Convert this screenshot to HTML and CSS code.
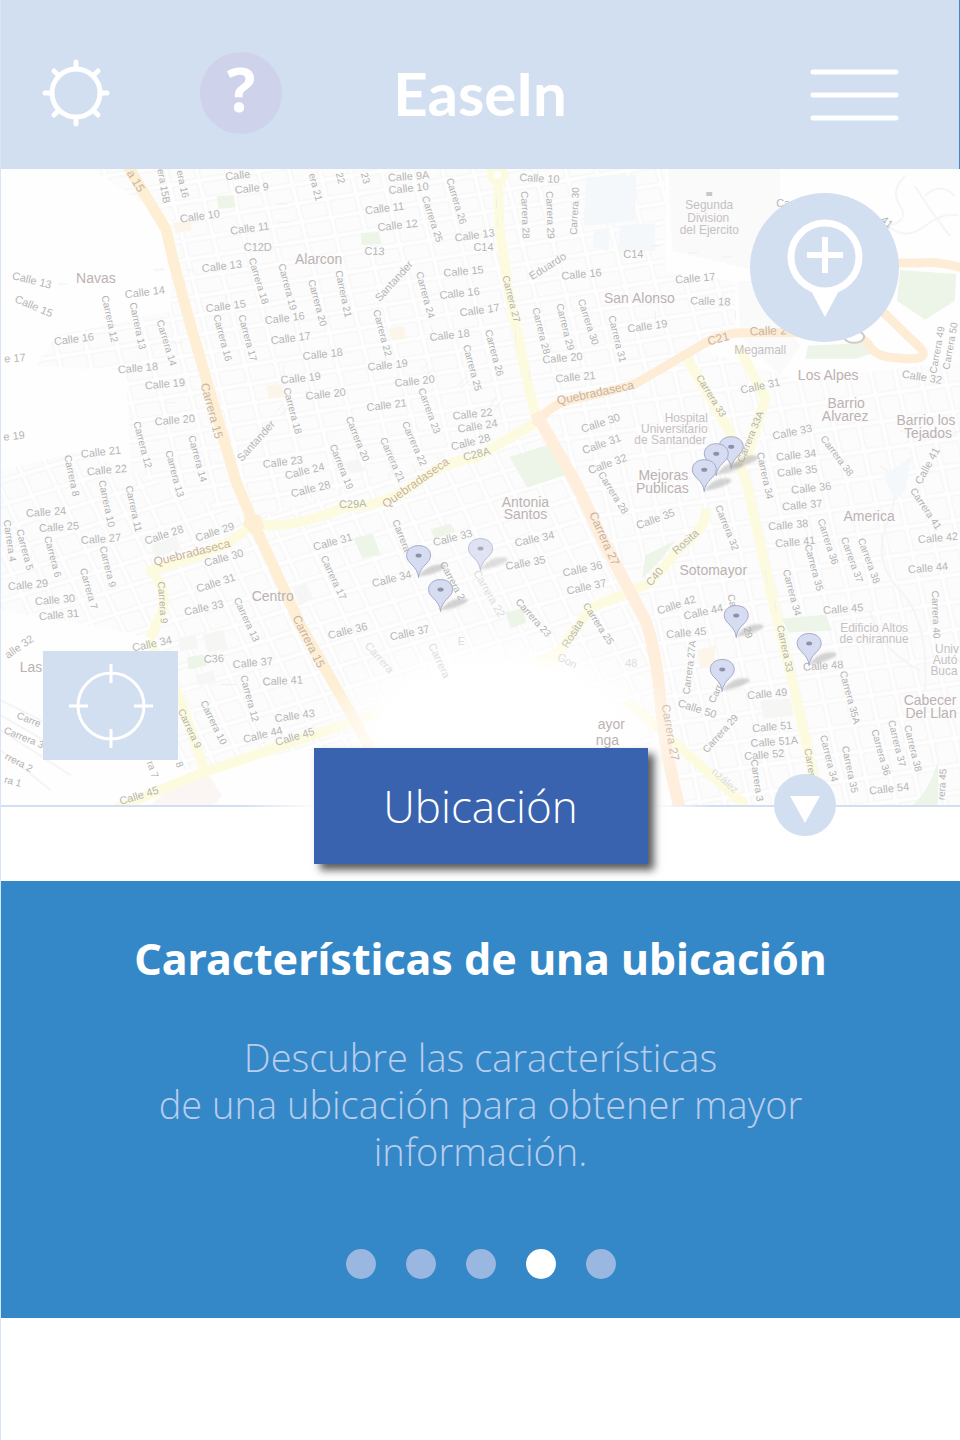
FILE: index.html
```html
<!DOCTYPE html>
<html lang="es">
<head>
<meta charset="utf-8">
<meta name="viewport" content="width=device-width, initial-scale=1">
<title>EaseIn</title>
<link rel="stylesheet" href="styles.css">
</head>
<body>
<div class="app">
  <header class="topbar">
    <div class="topbar-tools">
      <button class="icon-button" type="button" aria-label="Ajustes">
        <svg width="68" height="68" viewBox="-34 -34 68 68" fill="none" stroke="#fff" stroke-width="5" stroke-linecap="round">
          <circle r="24"/>
          <path d="M0-26V-31M0 26V31M-26 0H-31M26 0H31M-18-18L-22-22M18-18L22-22M-18 18L-22 22M18 18L22 22"/>
        </svg>
      </button>
      <button class="help" type="button">?</button>
    </div>
    <h1 class="brand">EaseIn</h1>
    <button class="icon-button menu" type="button" aria-label="Menú">
      <svg width="89" height="52" viewBox="0 0 89 52" stroke="#fff" stroke-width="5" stroke-linecap="round">
        <path d="M3 3H86M3 26H86M3 49H86"/>
      </svg>
    </button>
  </header>

  <main>
    <section class="map" aria-label="Mapa">
      <svg class="map-canvas" viewBox="0 168 960 637" preserveAspectRatio="xMidYMid slice">
        <defs>
          <pattern id="blocks-west" width="30" height="19" patternUnits="userSpaceOnUse" patternTransform="rotate(-9) skewX(5)">
            <rect x="2" y="2" width="25" height="14" fill="#fcfcfc" stroke="#f4f4f4"/>
          </pattern>
          <pattern id="blocks-south" width="26" height="23" patternUnits="userSpaceOnUse" patternTransform="rotate(-17) skewX(8)">
            <rect x="2" y="2" width="21" height="18" fill="#fcfcfc" stroke="#f4f4f4"/>
          </pattern>
          <pattern id="blocks-east" width="24" height="27" patternUnits="userSpaceOnUse" patternTransform="rotate(-8) skewX(5)">
            <rect x="2" y="2" width="19" height="22" fill="#fcfcfc" stroke="#f4f4f4"/>
          </pattern>
          <radialGradient id="fade">
            <stop offset="0" stop-color="#fff"/>
            <stop offset=".62" stop-color="#fff"/>
            <stop offset="1" stop-color="#fff" stop-opacity="0"/>
          </radialGradient>
          <g id="pin">
            <path d="M3 17Q13 7 25 9Q31 11 22 15Q12 20 0 21Z" fill="#aaa" opacity=".5" filter="url(#soft)"/>
            <path d="M0 22C-1 10-12 8-12 0C-12-6-7-10 0-10S12-6 12 0C12 8 1 10 0 22Z" fill="#d6dcf2" stroke="#a5a9c8" stroke-width="1"/>
            <ellipse rx="3" ry="2" fill="#8f91a8"/>
          </g>
          <filter id="soft" x="-20%" y="-20%" width="140%" height="140%"><feGaussianBlur stdDeviation="1"/></filter>
        </defs>

        <rect y="168" width="960" height="637" fill="#fefefe"/>
        <path d="M90 168H665V270L735 280V330L640 380L540 410L500 445L250 520L130 470L125 370L35 365L55 335L170 310V220Z" fill="url(#blocks-west)"/>
        <path d="M0 470L80 450L250 520L530 420L600 520L660 680L650 750H300L180 770L160 640L90 625L0 610Z" fill="url(#blocks-south)"/>
        <path d="M545 415L700 350L800 380L960 360V805H680L650 640Z" fill="url(#blocks-east)"/>
        <path d="M668 168H780V275L672 250Z" fill="#fafafa"/>
        <path d="M738 280H757L800 345L780 375L740 335Z" fill="#fafafa"/>
        <g fill="none" stroke="#f5f5f5" stroke-width="2">
          <path d="M905 175Q890 190 900 205T888 225Q905 240 925 225T958 215M925 195Q940 180 955 195M915 185Q930 210 950 235"/>
          <path d="M880 465Q905 480 888 520T900 590T925 690M870 610Q880 650 920 670M900 430Q940 440 960 430"/>
          <path d="M0 700L80 740M0 715L60 750M0 730L70 775M0 750L50 790"/>
        </g>

        <g fill="#edf5e8">
          <path d="M216 195L233 194L235 206L218 208Z"/>
          <path d="M360 232L378 231L381 243L361 244Z"/>
          <path d="M509 456L548 444L566 474L527 487Z"/>
          <path d="M900 269L956 273L955 300L925 319L897 300Z"/>
          <path d="M808 345L870 342L880 350L856 358L805 358Z"/>
          <path d="M353 538L372 533L380 554L362 558Z"/>
          <path d="M430 529L450 523L455 531L434 538Z"/>
          <path d="M505 612L522 608L526 622L510 628Z"/>
          <path d="M782 618L826 614L832 630L788 632Z"/>
          <path d="M645 555L675 540L660 560L642 578Z"/>
          <path d="M938 760V805H912Q930 790 938 760Z"/>
          <path d="M186 657L202 654L206 665L188 669Z"/>
        </g>
        <g fill="#f4f8fa">
          <path d="M586 176L636 174L635 220L583 225Z"/>
          <path d="M594 229L609 228L608 250L592 246Z"/>
          <path d="M620 225L655 222V250H617Z"/>
          <path d="M884 475L912 455L905 490L895 500Z"/>
        </g>
        <g fill="#f6f6f5">
          <path d="M150 545L175 535L180 548L155 556Z"/>
          <path d="M177 638L195 634L197 648L179 651Z"/>
          <path d="M202 634L222 629L227 648L207 652Z"/>
          <path d="M195 675L212 670L215 681L198 685Z"/>
          <path d="M292 588L305 582L313 598L299 605Z"/>
          <path d="M760 700L790 698L793 715L764 718Z"/>
          <path d="M343 463L358 459L365 470L350 473Z"/>
        </g>
        <g fill="#fcf6ea">
          <path d="M172 222L190 220L191 230L175 232Z"/>
          <path d="M265 385L281 383L284 396L268 398Z"/>
          <path d="M388 328L403 325L406 338L391 340Z"/>
          <path d="M697 650L715 645L714 665L700 668Z"/>
        </g>
        <path d="M170 787L206 773L221 795L213 805H150Z" fill="#fbf5f3"/>

        <g fill="none" stroke-linejoin="round">
          <path d="M497 168L499 225L508 290L530 395L537 420M253 523L230 541L195 556L150 570Q166 585 162 610L149 638M148 640L180 700L203 768M115 808L200 773L380 712M253 523Q290 530 345 506Q385 506 415 483T475 457L535 422M687 358L728 428L747 485L773 602L790 672L817 790M738 345L765 398L745 462M706 508Q705 530 682 545L650 582L590 608L560 650L520 673M625 700L655 725L745 805M560 650L535 685" stroke="#fdfbdf" stroke-width="10"/>
          <path d="M125 162L165 228L173 262L190 325L235 480L253 523L300 625L370 748" stroke="#feefd4" stroke-width="11"/>
          <path d="M535 425Q548 403 575 398T635 383L700 345Q720 332 745 332H830Q855 330 868 343Q875 356 895 357Q933 361 920 347L890 318Q868 298 865 262L920 262Q940 260 965 268" stroke="#feedd6" stroke-width="9"/>
          <path d="M535 412L578 487L600 535L645 620Q656 650 660 700T680 810" stroke="#feeedb" stroke-width="12"/>
          <path d="M246 512L260 515L264 528L251 533L242 524Z" fill="#feefd4"/>
          <circle cx="497" cy="174" r="7" fill="#fff" stroke="#fdfbdf" stroke-width="7"/>
        </g>
        <g fill="none" stroke="#eef0f2" stroke-width="1">
          <path d="M153 269H163L160 267M185 269H193M57 283H66M170 342H182M165 402H175M277 203H287M276 221H288M270 246H280M226 293V302M283 365V374M385 350V362M430 325L434 335M496 197V207M497 217V227M515 330V340M529 370V380M688 252H698M722 256H732M655 310V320M735 310V318M220 684H235M650 245H660M765 570L767 583M775 600L776 612"/>
          <path d="M420 370L428 362M425 376L432 368M457 385L467 375M460 388L468 380M490 405L496 396M494 410L501 400M275 412L282 404M280 415L287 407"/>
        </g>
        <rect x="706" y="191" width="6" height="4" fill="#c8c8c8"/>
        <ellipse cx="854" cy="336" rx="10" ry="6" fill="#fff" stroke="#ccc" stroke-width="2"/>

        <g id="labels"></g>
        <ellipse cx="500" cy="735" rx="185" ry="110" fill="url(#fade)"/>
        <g id="faded-labels"></g>

        <use href="#pin" x="731" y="446"/><use href="#pin" x="716" y="453"/><use href="#pin" x="704" y="469"/>
        <use href="#pin" x="418" y="555"/><use href="#pin" x="480" y="548" opacity=".75"/><use href="#pin" x="440" y="589"/>
        <use href="#pin" x="736" y="615"/><use href="#pin" x="809" y="643"/><use href="#pin" x="722" y="669"/>
      </svg>

      <button class="add-place" type="button" aria-label="Agregar ubicación">
        <svg width="76" height="98" viewBox="0 0 76 98">
          <circle cx="38" cy="38" r="34" fill="none" stroke="#fff" stroke-width="7"/>
          <path d="M38 18V54M20 36H56" stroke="#fff" stroke-width="6"/>
          <path d="M22 68Q38 72 54 68L38 98Z" fill="#fff"/>
        </svg>
      </button>
      <button class="locate" type="button" aria-label="Mi posición">
        <svg width="84" height="84" viewBox="0 0 84 84" fill="none" stroke="#fff" stroke-width="3">
          <circle cx="42" cy="42" r="33"/>
          <path d="M42 0V19M42 65V84M0 42H19M65 42H84"/>
        </svg>
      </button>
      <button class="collapse" type="button" aria-label="Ocultar mapa">
        <svg width="30" height="28" viewBox="0 0 30 28"><path d="M0 0H30L15 27Z" fill="#fff"/></svg>
      </button>
    </section>

    <div class="strip">
      <button class="place-button" type="button">Ubicación</button>
    </div>

    <section class="panel">
      <h2 class="panel-title">Características de una ubicación</h2>
      <p class="panel-text">Descubre las características <br>de una ubicación para obtener mayor información.</p>
      <nav class="dots" aria-label="Pasos">
        <button class="dot" type="button" aria-label="Paso 1"></button>
        <button class="dot" type="button" aria-label="Paso 2"></button>
        <button class="dot" type="button" aria-label="Paso 3"></button>
        <button class="dot dot-active" type="button" aria-label="Paso 4" aria-current="step"></button>
        <button class="dot" type="button" aria-label="Paso 5"></button>
      </nav>
    </section>
  </main>
</div>
<script src="map.js"></script>
</body>
</html>
```
FILE: styles.css
```css
* { box-sizing: border-box; }

body {
  margin: 0;
  background: #fff;
  font-family: "Open Sans", "Noto Sans", sans-serif;
}

button {
  margin: 0;
  padding: 0;
  border: 0;
  background: none;
  color: inherit;
  font: inherit;
  cursor: pointer;
}

svg { display: block; }

.app {
  min-height: 100vh;
  border-left: 1px solid #d9e5f4;
}

.topbar {
  display: grid;
  grid-template-columns: 1fr auto 1fr;
  align-items: center;
  height: 169px;
  padding: 16px 41px 0;
  border-right: 1px solid #3f86c2;
  background: #d2dff0;
  color: #fff;
}

.topbar-tools {
  display: flex;
  align-items: center;
  gap: 90px;
}

.help {
  width: 82px;
  height: 82px;
  padding-bottom: 8px;
  border-radius: 50%;
  background: #ced2ea;
  font-size: 60px;
  font-weight: 700;
  line-height: 74px;
}

.brand {
  margin: 0;
  font-family: Lato, "Open Sans", sans-serif;
  font-size: 60px;
  font-weight: 700;
  line-height: 72px;
}

.menu {
  justify-self: end;
  margin: 4px 19px 0 0;
}

.map {
  position: relative;
  aspect-ratio: 960 / 637;
}

.map-canvas {
  width: 100%;
  height: 100%;
}

.map text {
  font-family: "Liberation Sans", Arial, sans-serif;
  text-anchor: middle;
  dominant-baseline: central;
}

.calle { font-size: 11px; fill: #b6b6b6; }
.carrera { font-size: 10px; fill: #b2b2b2; }
.avenue { font-size: 12px; fill: #c9b3a2; }
.area { font-size: 14px; fill: #bcb2b2; }
.site { font-size: 12px; fill: #c6c1c1; }
.ghost { font-size: 11px; fill: #dedede; }

.add-place,
.locate,
.collapse {
  position: absolute;
  display: flex;
  align-items: center;
  justify-content: center;
  background: #d2dff0;
}

.add-place {
  top: 24px;
  right: 61px;
  width: 149px;
  height: 149px;
  border-radius: 50%;
}

.locate {
  left: 42px;
  bottom: 45px;
  width: 135px;
  height: 109px;
}

.collapse {
  right: 124px;
  bottom: -31px;
  z-index: 1;
  width: 62px;
  height: 62px;
  padding-top: 10px;
  border-radius: 50%;
}

.strip {
  position: relative;
  height: 76px;
  border-top: 2px solid;
  border-image: linear-gradient(90deg, #d2dff0 25%, #fff 33%, #fff 68%, #d2dff0 74%) 1;
}

.place-button {
  position: absolute;
  left: 50%;
  bottom: 17px;
  width: 334px;
  height: 116px;
  background: #3963ae;
  box-shadow: 6px 6px 8px rgba(0, 0, 0, 0.65);
  color: #fff;
  font-size: 44px;
  font-weight: 300;
  transform: translateX(-50%);
}

.panel {
  padding: 48px 40px 39px;
  background: #3488c8;
  text-align: center;
}

.panel-title {
  margin: 0;
  color: #fff;
  font-family: "Noto Sans", sans-serif;
  font-size: 43px;
  font-weight: 700;
  line-height: 60px;
}

.panel-text {
  max-width: 720px;
  margin: 45px auto 0;
  color: #b9cdec;
  font-size: 38px;
  font-weight: 300;
  line-height: 47px;
}

.dots {
  display: flex;
  justify-content: center;
  gap: 30px;
  margin-top: 74px;
}

.dot {
  width: 30px;
  height: 30px;
  border-radius: 50%;
  background: #9ab7e1;
}

.dot-active { background: #fff; }
```
FILE: map.js
```js
// Each entry: x, y (label centre), rotation in degrees, text.
const labels = {
  calle: `
237 174 -6 Calle|251 187 -6 Calle 9|199 215 -8 Calle 10|249 227 -8 Calle 11|257 246 0 C12D|221 265 -7 Calle 13
31 279 14 Calle 13|144 291 -7 Calle 14|33 305 23 Calle 15|73 338 -7 Calle 16|225 305 -7 Calle 15|284 317 -7 Calle 16
290 337 -7 Calle 17|14 357 -4 e 17|137 367 -5 Calle 18|164 383 -5 Calle 19|322 353 -6 Calle 18|300 377 -6 Calle 19
325 393 -6 Calle 20|174 419 -5 Calle 20|255 440 -48 Santander|13 435 -6 e 19|100 451 -6 Calle 21|106 469 -5 Calle 22
282 461 -7 Calle 23|304 470 -14 Calle 24|310 488 -14 Calle 28
408 175 -4 Calle 9A|408 187 -6 Calle 10|384 207 -7 Calle 11|397 224 -6 Calle 12|474 234 -8 Calle 13|374 250 3 C13|483 246 0 C14
393 280 -48 Santander|463 270 -5 Calle 15|459 292 -6 Calle 16|479 309 -8 Calle 17|449 334 -6 Calle 18|387 364 -6 Calle 19
414 380 -6 Calle 20|386 404 -7 Calle 21|472 413 -6 Calle 22|477 425 -9 Calle 24|470 441 -14 Calle 28|476 453 -14 C28A
539 177 3 Calle 10|547 265 -32 Eduardo|581 273 -5 Calle 16|633 253 0 C14|562 357 -5 Calle 20|575 376 -5 Calle 21
600 422 -18 Calle 30|601 443 -20 Calle 31|607 463 -20 Calle 32|647 325 -8 Calle 19
783 202 0 Ca|887 221 40 41|695 277 -5 Calle 17|710 300 2 Calle 18|760 385 -12 Calle 31|792 431 -12 Calle 33|796 454 -6 Calle 34
797 470 -6 Calle 35|811 487 -6 Calle 36|922 376 9 Calle 32|927 465 -62 Calle 41
45 511 -4 Calle 24|58 526 -4 Calle 25|100 538 -4 Calle 27|163 534 -18 Calle 28|214 531 -18 Calle 29|223 557 -15 Calle 30
27 584 -5 Calle 29|54 599 -5 Calle 30|58 614 -5 Calle 31|215 582 -18 Calle 31|203 607 -12 Calle 33|18 646 -35 alle 32
151 643 -12 Calle 34|213 658 -3 C36|252 662 -5 Calle 37|282 680 -3 Calle 41|294 715 -8 Calle 43|262 734 -14 Calle 44
294 736 -17 Calle 45|138 795 -17 Calle 45|332 541 -15 Calle 31
352 503 -3 C29A|452 537 -14 Calle 33|534 538 -12 Calle 34|525 562 -10 Calle 35|391 578 -14 Calle 34|582 568 -12 Calle 36
586 586 -12 Calle 37|572 633 -58 Rosita|347 630 -14 Calle 36|409 632 -12 Calle 37
655 518 -20 Calle 35|685 541 -42 Rosita|654 576 -50 C40|802 504 -5 Calle 37|788 524 -5 Calle 38|795 541 -5 Calle 41
938 537 -5 Calle 42|928 567 -5 Calle 44|676 604 -18 Calle 42|703 611 -12 Calle 44|686 632 -5 Calle 45|843 608 -4 Calle 45
823 665 -4 Calle 48|767 693 -5 Calle 49|697 708 18 Calle 50|772 726 -5 Calle 51|774 741 -4 Calle 51A|764 754 -5 Calle 52|889 788 -6 Calle 54`,
  carrera: `
163 185 80 era 15B|182 183 78 era 16|315 186 75 era 21|258 280 73 Carrera 18|287 286 75 Carrera 19|317 302 75 Carrera 20
109 318 78 Carrera 12|137 325 78 Carrera 13|166 342 73 Carrera 14|222 337 75 Carrera 16|247 337 75 Carrera 17
292 410 75 Carrera 18|142 444 75 Carrera 12|174 473 75 Carrera 13|197 458 75 Carrera 14|71 475 78 Carrera 8
340 177 75 22|365 177 75 23|456 200 73 Carrera 26|432 218 72 Carrera 25|343 293 78 Carrera 21|425 294 75 Carrera 24
511 298 76 Carrera 27|382 332 75 Carrera 22|494 352 75 Carrera 26|472 367 75 Carrera 25|429 410 70 Carrera 23
357 438 68 Carrera 20|414 443 66 Carrera 22|392 459 66 Carrera 21|341 466 68 Carrera 19|525 214 88 Carrera 28
550 214 88 Carrera 29|574 210 -87 Carrera 30|541 330 76 Carrera 28|565 326 76 Carrera 29|588 321 72 Carrera 30
617 338 76 Carrera 31|613 492 58 Carrera 28|711 395 58 Carrera 33|750 436 -68 Carrera 33A|837 455 53 Carrera 38
937 349 -80 Carrera 49|950 345 -80 Carrera 50|765 475 78 Carrera 34
106 503 78 Carrera 10|133 508 78 Carrera 11|9 540 82 Carrera 4|24 549 75 Carrera 5|52 556 75 Carrera 6|107 566 76 Carrera 9
88 588 74 Carrera 7|162 602 86 Carrera 9|246 619 65 Carrera 13|249 698 75 Carrera 12|213 722 64 Carrera 10
189 728 65 Carrera 9|28 719 22 Carre|23 737 22 Carrera 3|18 762 28 rrera 2|12 781 15 ra 1|152 769 70 ra 7|179 764 70 8
401 535 68 Carrera|333 577 65 Carrera 17|452 580 62 Carrera 2|533 617 48 Carrera 23|598 623 57 Carrera 25
727 527 68 Carrera 32|828 541 72 Carrera 36|926 508 56 Carrera 41|814 567 75 Carrera 35|852 559 70 Carrera 37
869 560 70 Carrera 38|792 592 75 Carrera 34|936 614 88 Carrera 40|689 667 -83 Carrera 27A|785 648 78 Carrera 33
732 600 75 Ca|748 632 75 29|715 693 -65 Carr|720 733 -48 Carrera 29|850 697 75 Carrera 35A|829 758 76 Carrera 34
850 769 78 Carrera 35|881 752 74 Carrera 36|897 743 76 Carrera 37|913 748 76 Carrera 38|810 762 80 Carrer
942 784 -86 rera 45|757 780 82 Carrera 3`,
  avenue: `
135 180 60 a 15|211 410 75 Carrera 15|308 641 63 Carrera 15|604 538 66 Carrera 27|670 732 80 Carrera 27
595 392 -12 Quebradaseca|191 552 -14 Quebradaseca|415 482 -35 Quebradaseca|718 338 -15 C21|768 330 -2 Calle 2`,
  area: `
95 277 0 Navas|318 258 0 Alarcon|639 297 0 San Alonso|828 374 0 Los Alpes|846 402 0 Barrio|845 415 0 Alvarez
926 419 0 Barrio los|928 432 0 Tejados|663 474 0 Mejoras|662 487 0 Publicas|272 595 0 Centro|30 667 0 Las
525 501 0 Antonia|525 513 0 Santos|713 569 0 Sotomayor|869 515 0 America|930 700 0 Cabecer|931 713 0 Del Llan`,
  site: `
709 204 0 Segunda|708 217 0 Division|709 229 0 del Ejercito|760 349 0 Megamall|686 417 0 Hospital
674 428 0 Universitario|670 439 0 de Santander|874 627 0 Edificio Altos|874 638 0 de chirannue
947 649 0 Univ|945 660 0 Autó|944 671 0 Buca`
};

const fadedLabels = {
  ghost: `
489 593 60 Carrera 22|567 660 28 Gon|631 663 0 48|379 657 48 Carrera|439 660 65 Carrera|461 640 0 E|725 780 42 nzález`,
  area: `611 724 0 ayor|607 740 0 nga`
};

function drawLabels(target, groups) {
  for (const [kind, rows] of Object.entries(groups)) {
    for (const entry of rows.trim().split(/[|\n]/)) {
      const [x, y, angle, ...words] = entry.split(" ");
      const text = document.createElementNS("http://www.w3.org/2000/svg", "text");
      text.setAttribute("class", kind);
      text.setAttribute("transform", `translate(${x} ${y}) rotate(${angle})`);
      text.textContent = words.join(" ");
      target.append(text);
    }
  }
}

drawLabels(document.getElementById("labels"), labels);
drawLabels(document.getElementById("faded-labels"), fadedLabels);
```
